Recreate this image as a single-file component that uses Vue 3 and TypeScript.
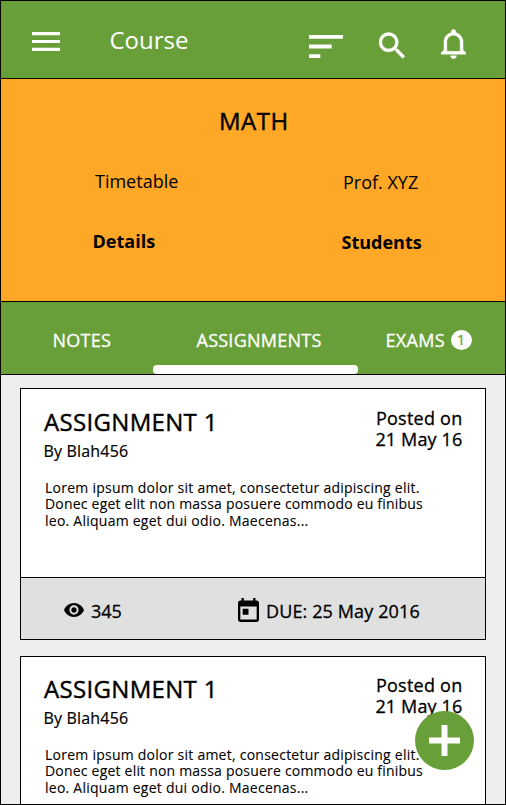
<script setup lang="ts">
interface Assignment {
  id: number
  title: string
  author: string
  posted: string
  excerpt: string[]
  views: number
  due: string
}

const excerpt = [
  'Lorem ipsum dolor sit amet, consectetur adipiscing elit.',
  'Donec eget elit non massa posuere commodo eu finibus',
  'leo. Aliquam eget dui odio. Maecenas...',
]

const assignments: Assignment[] = [1, 2].map((id) => ({
  id,
  title: 'ASSIGNMENT 1',
  author: 'Blah456',
  posted: '21 May 16',
  excerpt,
  views: 345,
  due: '25 May 2016',
}))
</script>

<template>
  <div class="screen">
    <header class="bar">
      <svg class="menu" viewBox="3 6 18 12" preserveAspectRatio="none"><path d="M3 18h18v-2H3v2zm0-5h18v-2H3v2zm0-7v2h18V6H3z" /></svg>
      <h1 class="heading">Course</h1>
      <div class="actions">
        <svg class="sort" viewBox="3 6 18 12" preserveAspectRatio="none"><path d="M3 18h6v-2H3v2zM3 6v2h18V6H3zm0 7h12v-2H3v2z" /></svg>
        <svg class="search" viewBox="3 3 17.49 17.49"><path d="M15.5 14h-.79l-.28-.27C15.41 12.59 16 11.11 16 9.5 16 5.91 13.09 3 9.5 3S3 5.91 3 9.5 5.91 16 9.5 16c1.61 0 3.09-.59 4.23-1.57l.27.28v.79l5 4.99L20.49 19l-4.99-5zm-6 0C7.01 14 5 11.99 5 9.5S7.01 5 9.5 5 14 7.01 14 9.5 11.99 14 9.5 14z" /></svg>
        <svg class="bell" viewBox="3 2 17 20"><path d="M11.5 22c1.1 0 2-.9 2-2h-4c0 1.1.9 2 2 2zm6.5-6v-5.5c0-3.07-2.13-5.64-5-6.32V3.5c0-.83-.67-1.5-1.5-1.5S10 2.67 10 3.5v.68c-2.87.68-5 3.25-5 6.32V16l-2 2v1h17v-1l-2-2zm-2 1H7v-6.5C7 8.01 9.01 6 11.5 6S16 8.01 16 10.5V17z" /></svg>
      </div>
    </header>

    <section class="hero">
      <h2 class="subject">MATH</h2>
      <div class="links">
        <div class="col">
          <span class="light">Timetable</span>
          <span class="strong">Details</span>
        </div>
        <div class="col people">
          <span class="light">Prof. XYZ</span>
          <span class="strong">Students</span>
        </div>
      </div>
    </section>

    <nav class="tabs">
      <div class="tab notes">NOTES</div>
      <div class="tab active">ASSIGNMENTS</div>
      <div class="tab exams">EXAMS<span class="badge">1</span></div>
    </nav>

    <main class="list">
      <article v-for="a in assignments" :key="a.id" class="card">
        <div class="content">
          <div class="top">
            <div>
              <h3 class="title">{{ a.title }}</h3>
              <p class="author">By {{ a.author }}</p>
            </div>
            <div class="posted">
              <span>Posted on</span>
              <span class="date">{{ a.posted }}</span>
            </div>
          </div>
          <p class="excerpt">
            <span v-for="(line, i) in a.excerpt" :key="i" class="line">{{ line }}</span>
          </p>
        </div>
        <footer class="foot">
          <svg class="eye" viewBox="1 4.5 22 15" preserveAspectRatio="none"><path d="M12 4.5C7 4.5 2.73 7.61 1 12c1.73 4.39 6 7.5 11 7.5s9.27-3.11 11-7.5c-1.73-4.39-6-7.5-11-7.5zM12 17c-2.76 0-5-2.24-5-5s2.24-5 5-5 5 2.24 5 5-2.24 5-5 5zm0-8c-1.66 0-3 1.34-3 3s1.34 3 3 3 3-1.34 3-3-1.34-3-3-3z" /></svg>
          <span class="views">{{ a.views }}</span>
          <svg class="calendar" viewBox="3 1 18 20" preserveAspectRatio="none"><path d="M19 3h-1V1h-2v2H8V1H6v2H5c-1.11 0-1.99.9-1.99 2L3 19c0 1.1.89 2 2 2h14c1.1 0 2-.9 2-2V5c0-1.1-.9-2-2-2zm0 16H5V8h14v11zM7 10h5v5H7z" /></svg>
          <span class="due">DUE: {{ a.due }}</span>
        </footer>
      </article>
    </main>

    <button class="fab" aria-label="Add assignment">
      <svg viewBox="0 0 31 31"><path d="M12.5 0h6v12.5H31v6H18.5V31h-6V18.5H0v-6h12.5z" /></svg>
    </button>
  </div>
</template>

<style>
body {
  margin: 0;
}
</style>

<style scoped>
.screen {
  position: relative;
  box-sizing: border-box;
  width: 506px;
  height: 805px;
  overflow: hidden;
  display: flex;
  flex-direction: column;
  border: 1px solid #000;
  background: #eee;
  color: #000;
  font-family: 'Open Sans', 'Noto Sans', sans-serif;
  font-weight: 400;
  font-size: 18px;
  line-height: 20px;
  white-space: nowrap;
}
h1, h2, h3, p {
  margin: 0;
  font-weight: 400;
}
svg {
  display: block;
  flex: none;
}
/* Open Sans has no medium cut here, so a hairline stroke thickens the regular one. */
.subject, .tabs, .card {
  -webkit-text-stroke: 0.3px currentColor;
}
.bar {
  flex: none;
  display: flex;
  align-items: flex-start;
  box-sizing: border-box;
  height: 78px;
  padding: 0 39px 0 31px;
  border-bottom: 1px solid #000;
  background: #689f38;
  color: #fff;
  fill: #fff;
}
.menu {
  width: 28px;
  height: 19px;
  margin-top: 31px;
}
.heading {
  margin: 24px 0 0 49.5px;
  font-size: 24px;
  line-height: 30px;
}
.actions {
  display: flex;
  align-items: flex-start;
  margin-left: auto;
}
.sort {
  width: 34px;
  height: 23px;
  margin: 34px 36px 0 0;
}
.search {
  width: 26px;
  height: 27px;
  margin: 31px 36px 0 0;
  stroke: #fff;
  stroke-width: 0.25;
}
.bell {
  width: 25px;
  height: 30px;
  margin-top: 28px;
  stroke: #fff;
  stroke-width: 0.25;
}
.hero {
  flex: none;
  box-sizing: border-box;
  height: 223px;
  padding-top: 27px;
  border-bottom: 1px solid #000;
  background: #ffa726;
}
.subject {
  padding-left: 218px;
  font-size: 24px;
  line-height: 30px;
  letter-spacing: 0.5px;
  -webkit-text-stroke-width: 0.4px;
}
.links {
  display: flex;
  padding: 35px 0 0 91.5px;
}
.col {
  flex: none;
  display: flex;
  flex-direction: column;
  gap: 40px;
  width: 249px;
}
.people {
  width: auto;
  margin-top: 1px;
}
.light {
  padding-left: 2.5px;
}
.people .light {
  padding-left: 1.5px;
}
.strong {
  font-weight: 700;
}
.tabs {
  flex: none;
  display: flex;
  align-items: stretch;
  box-sizing: border-box;
  height: 73px;
  margin-left: -1px;
  border-bottom: 1px solid #000;
  background: #689f38;
  color: #fff;
  letter-spacing: 0.25px;
}
.tab {
  display: flex;
  box-sizing: border-box;
  padding-top: 28px;
}
.notes {
  width: 153px;
  padding-left: 52.5px;
}
.active {
  flex-direction: column;
  width: 205px;
  padding-left: 43.5px;
}
.active::after {
  content: '';
  height: 9px;
  margin: auto 0 0 -43.5px;
  border-radius: 4px;
  background: #fff;
}
.exams {
  padding-left: 27.5px;
  letter-spacing: 0.35px;
}
.badge {
  width: 21px;
  height: 20px;
  margin-left: 5.5px;
  border-radius: 50%;
  background: #fff;
  color: #689f38;
  font-size: 14px;
  letter-spacing: 0;
  text-align: center;
}
.list {
  flex: none;
  display: flex;
  flex-direction: column;
  gap: 16px;
  padding: 13px 19px;
}
.card {
  box-sizing: border-box;
  height: 252px;
  border: 1px solid #000;
  background: #fff;
}
.content {
  box-sizing: border-box;
  height: 188px;
  padding: 18px 22.5px 0;
}
.card + .card .content {
  padding-top: 17px;
}
.top {
  display: flex;
  justify-content: space-between;
}
.title {
  padding-left: 0.5px;
  font-size: 24px;
  line-height: 30px;
  letter-spacing: 0.32px;
  -webkit-text-stroke-width: 0.4px;
}
.author {
  margin-top: 4px;
  font-size: 16px;
  line-height: 20px;
  letter-spacing: 0.18px;
  -webkit-text-stroke-width: 0.2px;
}
.posted {
  display: flex;
  flex-direction: column;
  align-items: flex-end;
  margin-top: 1px;
  line-height: 21px;
  letter-spacing: 0.25px;
}
.date {
  letter-spacing: 0.15px;
}
.excerpt {
  display: flex;
  flex-direction: column;
  margin: 19px 0 0 1.5px;
  font-size: 14px;
  line-height: 16.4px;
  letter-spacing: 0.245px;
  -webkit-text-stroke-width: 0.1px;
}
.line:nth-child(2) {
  letter-spacing: 0.205px;
}
.foot {
  display: flex;
  box-sizing: border-box;
  height: 62px;
  padding-left: 43px;
  border-top: 1px solid #000;
  background: #e0e0e0;
}
.eye {
  width: 20px;
  height: 14px;
  margin-top: 25px;
}
.views {
  width: 147px;
  margin: 23px 0 0 7px;
}
.calendar {
  width: 21px;
  height: 24px;
  margin-top: 20px;
}
.due {
  margin: 23px 0 0 7px;
  letter-spacing: 0.12px;
}
.fab {
  position: absolute;
  right: 31px;
  bottom: 34px;
  display: grid;
  place-items: center;
  width: 59px;
  height: 59px;
  padding: 0;
  border: 0;
  border-radius: 50%;
  background: #689f38;
  fill: #fff;
}
.fab svg {
  width: 31px;
  height: 31px;
}
</style>
